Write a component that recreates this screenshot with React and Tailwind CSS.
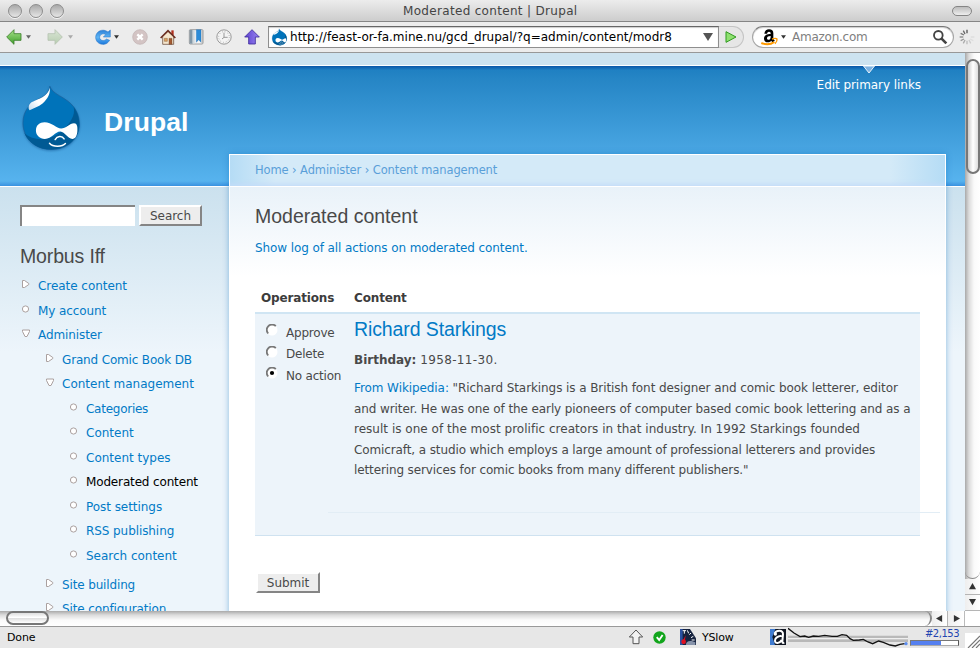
import React from "react";

const SANS = "font-['DejaVu_Sans',sans-serif]";
const HELV = "font-['Liberation_Sans',sans-serif]";
const UI = "font-['Noto_Sans',sans-serif]";

function TitleBar() {
  return (
    <div className="relative flex h-[22px] shrink-0 items-center border-b border-[#858585] bg-gradient-to-b from-[#ececec] to-[#cdcdcd] px-2">
      <div className="flex gap-[7px]">
        {[0, 1, 2].map((i) => (
          <span key={i} className="size-[14px] rounded-full border border-[#8d8d8d] bg-gradient-to-b from-[#a9a9a9] to-[#e6e6e6] shadow-[0_1px_0_#f4f4f4]" />
        ))}
      </div>
      <span className={`${SANS} ml-[339px] text-[12px] tracking-[0.32px] whitespace-nowrap text-[#444]`}>Moderated content | Drupal</span>
      <span className="mr-0 ml-auto h-[10px] w-[20px] rounded-full border border-[#858585] bg-gradient-to-b from-[#bdbdbd] to-[#eee]" />
    </div>
  );
}

function Caret({ className }) {
  return (
    <svg viewBox="0 0 6 4" className={`h-[4px] w-[5px] shrink-0 ${className}`}>
      <path d="M0 0h6L3 4z" fill="currentColor" />
    </svg>
  );
}

function DropletIcon({ className }) {
  return (
    <svg viewBox="60 70 190 210" className={className}>
      <defs>
        <linearGradient id="dropHi" x1="0" y1="1" x2="1" y2="0">
          <stop offset="0" stopColor="#c3dcef" />
          <stop offset="0.4" stopColor="#fff" />
        </linearGradient>
      </defs>
      <path d="M150 79c6 18 24 25 44 38 30 19 45 43 45 77 0 44-37 76-84 76-49 0-86-34-86-80 0-36 20-58 46-71 20-10 33-20 35-40z" fill="#0073ba" stroke="#1a5f9a" strokeWidth="2" />
      <path d="M222 142c10 14 17 31 17 52 0 44-37 76-84 76-40 0-70-20-82-50 30 28 84 24 116-8 24-24 38-44 33-70z" fill="#005a94" />
      <path d="M150 84c2 16-6 34-22 47-13 10-26 14-39 21-5-6-4-15 3-22 14-11 50-14 58-46z" fill="url(#dropHi)" />
      <path d="M134 188c22 0 36 18 50 19 14 0 26-16 39-16 9 0 11 10 10 23-1 14-6 24-15 24-14 0-23-21-36-22-15-1-26 22-47 22-15 0-27-10-27-25 0-16 11-25 26-25z" fill="#fff" />
      <path d="M166 240c6-11 21-12 27-2M149 251c10 12 38 12 48 1" fill="none" stroke="#fff" strokeWidth="4.500" strokeLinecap="round" />
    </svg>
  );
}

function ArrowIcon({ className, from, to, stroke }) {
  return (
    <svg viewBox="0 0 48 48" className={`size-[16px] shrink-0 ${className}`}>
      <defs>
        <linearGradient id={"arr" + from.slice(1)} x1="0" y1="0" x2="0" y2="1">
          <stop offset="0" stopColor={from} />
          <stop offset="1" stopColor={to} />
        </linearGradient>
      </defs>
      <path d="M2 24 24 2v12h21v20H24v12z" fill={`url(#arr${from.slice(1)})`} stroke={stroke} strokeWidth="2.5" strokeLinejoin="round" />
    </svg>
  );
}

function Toolbar() {
  return (
    <div className="flex h-[31px] shrink-0 items-center border-b border-[#989898] bg-[#ececec] pl-[6px]">
      <ArrowIcon from="#a7e38a" to="#3f9f2b" stroke="#3c7f2c" />
      <Caret className="ml-[4px] text-[#666]" />
      <ArrowIcon className="ml-[16px] rotate-180" from="#b7cdb0" to="#d9e5d4" stroke="#b6c3b1" />
      <Caret className="ml-[5px] text-[#aaa]" />
      <svg viewBox="0 0 48 48" className="ml-[22px] size-[16px] shrink-0">
        <defs>
          <linearGradient id="reload" x1="0" y1="0" x2="0" y2="1">
            <stop offset="0" stopColor="#2c7fd6" />
            <stop offset="0.5" stopColor="#5db4f4" />
            <stop offset="1" stopColor="#1c78dc" />
          </linearGradient>
        </defs>
        <path d="M46 3v21H25l7-7c-8-6-18 0-18 8 0 10 13 13 20 5l10 4C38 44 30 47 22 46 10 45 2 36 2 25 2 6 24-3 39 9z" fill="url(#reload)" stroke="#1f6fc4" strokeWidth="1.5" />
      </svg>
      <Caret className="ml-[3px] text-[#333]" />
      <svg viewBox="0 0 48 48" className="ml-[13px] size-[16px] shrink-0">
        <circle cx="24" cy="24" r="22" fill="#d3c4c4" stroke="#c0b0b0" strokeWidth="2" />
        <path d="m16 16 16 16M32 16 16 32" stroke="#fff" strokeWidth="7" />
      </svg>
      <svg viewBox="0 0 48 48" className="ml-[12px] size-[16px] shrink-0">
        <path d="M34 4h7v14h-7z" fill="#b3301e" />
        <path d="M8 22 24 7l17 15v24H8z" fill="#f5e6cd" stroke="#5b3a28" strokeWidth="2" />
        <path d="M2 27 24 5l22 22" fill="none" stroke="#6b2d20" strokeWidth="5" />
        <path d="M27 28h9v18h-9z" fill="#a45b32" stroke="#5b3a28" />
        <path d="M13 28h9v9h-9z" fill="#e0a15e" stroke="#5b3a28" />
      </svg>
      <svg viewBox="0 0 48 48" className="ml-[12px] size-[16px] shrink-0">
        <rect x="4" y="2" width="41" height="43" rx="3" fill="#f4f4f4" stroke="#777" strokeWidth="2" />
        <path d="M5 3h9v41H5z" fill="#8298a8" />
        <path d="M14 3h6v41h-6z" fill="#cfd8de" />
        <path d="M25 2h14v38l-7-8-7 8z" fill="#2b8bd8" stroke="#1767ad" />
        <path d="M41 4h3v40h-3z" fill="#aaa" />
      </svg>
      <svg viewBox="0 0 48 48" className="ml-[12px] size-[16px] shrink-0">
        <circle cx="24" cy="24" r="21.5" fill="#f4f4f4" stroke="#999" strokeWidth="3" />
        <circle cx="24" cy="24" r="16" fill="none" stroke="#999" strokeWidth="3" strokeDasharray="2 6.4" />
        <path d="M24 11v14h11M24 25l-6 5" fill="none" stroke="#888" strokeWidth="2.5" />
      </svg>
      <ArrowIcon className="ml-[12px] rotate-90" from="#9a86f0" to="#5b3fd0" stroke="#3d2a9c" />
      <div className="ml-[8px] flex h-[22px] w-[451px] shrink-0 items-center border border-[#8e8e8e] border-t-[#666] bg-white pl-[2px] shadow-[inset_0_1px_1px_#ccc]">
        <DropletIcon className="h-[18px] w-[17px] shrink-0" />
        <span className={`${SANS} ml-[2px] text-[12px] tracking-[0.02px] whitespace-nowrap text-black`}>http://feast-or-fa.mine.nu/gcd_drupal/?q=admin/content/modr8</span>
        <svg viewBox="0 0 10 8" className="mr-[5px] ml-auto h-[8px] w-[10px]">
          <path d="M0 0h10L5 8z" fill="#555" />
        </svg>
      </div>
      <div className="flex h-[22px] w-[25px] shrink-0 items-center rounded-r-full border border-l-0 border-[#c4c4c4] bg-[#e6e6e6] pl-[6px]">
        <svg viewBox="0 0 36 36" className="size-[12px]">
          <path d="M3 2 33 18 3 34z" fill="#8fe070" stroke="#2f9a1e" strokeWidth="3" strokeLinejoin="round" />
        </svg>
      </div>
      <div className="ml-[8px] flex h-[22px] w-[202px] shrink-0 items-center rounded-full border border-[#a5a5a5] border-t-[#777] bg-white pl-[8px] shadow-[inset_0_1px_1px_#ccc]">
        <svg viewBox="0 0 48 48" className="size-[16px] shrink-0 overflow-visible">
          <path d="M10 14C11 5 17 1 24 1c9 0 13 4 13 12v14c0 4 2 6 5 8l-7 5c-2-1-3-3-4-5-8 9-22 5-22-6 0-10 9-14 20-14 0-5-1-7-5-7-3 0-5 2-6 6zM29 21c-7 0-11 2-11 7 0 7 11 6 11-4z" fill="#000" fillRule="evenodd" />
          <path d="M1 42c14 6 28 5 39-3" fill="none" stroke="#ff9a00" strokeWidth="6" />
          <path d="M33 30c7-2 13-2 15 0 1 4-1 9-6 14" fill="none" stroke="#ff9a00" strokeWidth="4" />
        </svg>
        <Caret className="ml-[4px] text-[#333]" />
        <span className={`${SANS} ml-[6px] text-[12px] tracking-[-0.25px] text-[#808080]`}>Amazon.com</span>
        <svg viewBox="0 0 48 48" className="mr-[5px] ml-auto size-[16px]">
          <circle cx="19" cy="19" r="13" fill="none" stroke="#444" strokeWidth="5.5" />
          <path d="m28 28 15 15" stroke="#444" strokeWidth="8" />
        </svg>
      </div>
      <svg viewBox="0 0 48 48" className="ml-[5px] size-[16px] shrink-0" strokeWidth="4">
        <path d="M24 2v11" stroke="#555" />
        <path d="m13 5 5 10" stroke="#666" />
        <path d="m5 13 10 5" stroke="#777" />
        <path d="M2 24h11" stroke="#888" />
        <path d="m5 35 10-5" stroke="#999" />
        <path d="m13 43 5-10" stroke="#aaa" />
        <path d="M24 46V35" stroke="#bbb" />
        <path d="m35 43-5-10" stroke="#ccc" />
        <path d="m43 35-10-5M46 24H35" stroke="#ddd" />
      </svg>
    </div>
  );
}

function Bullet({ kind }) {
  return (
    <svg viewBox="0 0 10 10" className="-mt-[4px] size-[10px] shrink-0" fill="#fff" stroke="#aaa09f" strokeWidth="1">
      {kind === "leaf" && <circle cx="5.500" cy="5" r="3.100" />}
      {kind === "closed" && <path d="M2.500 1.500v7h2l4.300-3V4.500l-4.300-3z" strokeLinejoin="round" />}
      {kind === "open" && <path d="M2.500 2h7v1.500L7 8.500H5l-2.500-5z" strokeLinejoin="round" />}
    </svg>
  );
}

const MENU = [
  [0, "closed", "Create content", "tracking-[-0.05px]"],
  [0, "leaf", "My account", "tracking-[-0.1px]"],
  [0, "open", "Administer", "tracking-[-0.1px]"],
  [1, "closed", "Grand Comic Book DB", "tracking-[-0.16px]"],
  [1, "open", "Content management", "tracking-normal"],
  [2, "leaf", "Categories", "tracking-[-0.26px]"],
  [2, "leaf", "Content", "tracking-normal"],
  [2, "leaf", "Content types", "tracking-normal"],
  [2, "leaf", "Moderated content", "tracking-[-0.15px]"],
  [2, "leaf", "Post settings", "tracking-[-0.05px]"],
  [2, "leaf", "RSS publishing", "tracking-[-0.08px]"],
  [2, "leaf", "Search content", "tracking-[-0.02px]"],
  [1, "closed", "Site building", "tracking-[-0.14px]"],
  [1, "closed", "Site configuration", "tracking-[-0.12px]"],
];
const INDENT = ["pl-[20px]", "pl-[44px]", "pl-[68px]"];

function Button({ children, className }) {
  return (
    <button className={`flex items-center justify-center border-t-2 border-r-2 border-b-2 border-l-2 border-t-white border-r-[#858585] border-b-[#858585] border-l-white bg-[#ededed] text-[12px] tracking-[-0.05px] text-[#494949] ${className}`}>
      {children}
    </button>
  );
}

function Sidebar() {
  return (
    <div className="w-[229px] shrink-0 pt-[18px] whitespace-nowrap">
      <div className="flex gap-[4px] pl-[20px]">
        <div className="h-[21px] w-[115px] border-t-2 border-l-2 border-[#858585] bg-white" />
        <Button className="h-[21px] w-[63px]">Search</Button>
      </div>
      <h2 className={`${HELV} mt-[19px] h-[28.800px] pl-[20px] text-[19.500px] leading-[22px] tracking-[-0.15px] text-[#494949]`}>Morbus Iff</h2>
      {MENU.map(([level, kind, label, tracking]) => (
        <div key={label} className={`flex h-[24.500px] items-center gap-[8px] ${INDENT[level]} ${label === "Site building" ? "mt-[4.500px]" : ""}`}>
          <Bullet kind={kind} />
          <a className={`text-[12px] ${tracking} ${label === "Moderated content" ? "text-black" : "text-[#027ac6]"}`}>{label}</a>
        </div>
      ))}
    </div>
  );
}

function Radio({ checked }) {
  return (
    <svg viewBox="0 0 12 12" className="-mt-[5px] size-[12px] shrink-0">
      <circle cx="6" cy="6" r="5.500" fill="#fff" />
      <path d="M2.200 9.500A5 5 0 0 1 9.800 2.200" fill="none" stroke="#777" strokeWidth="1.800" />
      {checked && <circle cx="6" cy="6" r="2.100" fill="#000" />}
    </svg>
  );
}

function Panel() {
  return (
    <div className="-mt-[33px] flex w-[717px] shrink-0 flex-col border-x border-t border-white bg-[#ffffff] shadow-[0_0_6px_rgba(20,110,190,0.45)]">
      <div className="flex h-[32px] shrink-0 items-center border-b border-white bg-[linear-gradient(90deg,#b5dcf5_0,#d4eaf8_45px,#d4eaf8_660px,#b5dcf5_100%)] pl-[25px] text-[11.500px] tracking-[-0.11px] text-[#5a9fd8] shadow-[inset_0_-5px_5px_-3px_#c4dcf8]">
        Home › Administer › Content management
      </div>
      <div className="flex grow flex-col bg-[linear-gradient(#e9f2f9_0,#fff_90px)] pl-[25px]">
        <h2 className={`${HELV} mt-[18px] text-[19.500px] leading-[22px] text-[#494949]`}>Moderated content</h2>
        <p className="mt-[10px] text-[12px] leading-[22px] tracking-[-0.095px] text-[#027ac6]">Show log of all actions on moderated content.</p>
        <div className="mt-[29px] flex h-[24px] pl-[6px] text-[12px] leading-[21px] font-bold tracking-[-0.15px] text-[#3c3c3c]">
          <span className="w-[93px]">Operations</span>
          <span>Content</span>
        </div>
        <div className="flex h-[224px] w-[665px] shrink-0 border-t-2 border-b border-t-[#d0e5f3] border-b-[#cfe2f0] bg-[#edf4fa]">
          <div className="w-[99px] shrink-0 pt-[8px] pl-[11px] text-[12px] tracking-[-0.2px] text-[#494949]">
            {["Approve", "Delete", "No action"].map((t) => (
              <div key={t} className="flex h-[21.500px] items-center gap-[8px] whitespace-nowrap">
                <Radio checked={t === "No action"} />
                {t}
              </div>
            ))}
          </div>
          <div className="w-[566px] shrink-0 text-[12px] text-[#494949]">
            <h2 className={`${HELV} mt-[4px] text-[19.500px] leading-[22px] tracking-[-0.1px] text-[#027ac6]`}>Richard Starkings</h2>
            <p className="mt-[10px] leading-[20px]"><b>Birthday:</b> <span className="tracking-[0.35px]">1958-11-30.</span></p>
            <div className="mt-[8px] leading-[20.500px] whitespace-nowrap">
              <p className="tracking-[-0.085px]"><span className="text-[#027ac6]">From Wikipedia:</span> "Richard Starkings is a British font designer and comic book letterer, editor</p>
              <p className="tracking-[-0.1px]">and writer. He was one of the early pioneers of computer based comic book lettering and as a</p>
              <p className="tracking-[0.02px]">result is one of the most prolific creators in that industry. In 1992 Starkings founded</p>
              <p className="tracking-[-0.11px]">Comicraft, a studio which employs a large amount of professional letterers and provides</p>
              <p className="tracking-[-0.12px]">lettering services for comic books from many different publishers."</p>
            </div>
            <div className="mt-[31px] -ml-[26px] h-px w-[612px] bg-[#e2edf5]" />
          </div>
        </div>
        <Button className="mt-[36px] ml-px h-[21px] w-[64px]">Submit</Button>
      </div>
    </div>
  );
}

function Page() {
  return (
    <div className={`${SANS} flex h-[558px] w-[965px] flex-col overflow-hidden bg-[#edf5fb]`}>
      <div className="h-[13px] shrink-0 border-b border-white bg-[#cde3f0]" />
      <div className="flex h-[121px] shrink-0 justify-between border-b border-white bg-[linear-gradient(#0a57a8_0,#1f80c2_4px,#2585c5_12px,#57b3ee_115px,#3a92e0_100%)]">
        <div className="flex pt-[17px] pl-[20px]">
          <DropletIcon className="h-[70px] w-[63px] drop-shadow-[0_1px_1px_rgba(0,60,120,0.4)]" />
          <h1 className={`${HELV} mt-[24px] ml-[21px] text-[26.500px] leading-[30px] font-bold tracking-[0.1px] text-white`}>Drupal</h1>
        </div>
        <div className="flex flex-col items-center pr-[44px] text-[12px] text-white">
          <svg viewBox="0 0 12 8" className="h-[8px] w-[12px]">
            <path d="M0.500 0h11L6 7z" fill="#7fb2e0" stroke="#e8f3fb" />
          </svg>
          <span className="mt-[2px] tracking-[-0.05px]">Edit primary links</span>
        </div>
      </div>
      <div className="flex grow bg-[linear-gradient(#cbe1ee_0,#edf5fb_165px)]">
        <Sidebar />
        <Panel />
      </div>
    </div>
  );
}

const ARROWS = {
  up: "M4 0 8 7H0z",
  down: "M0 0h8L4 7z",
  left: "M7 0v8L0 4z",
  right: "M1 0v8l7-4z",
};
function ScrollArrow({ dir, className }) {
  return (
    <div className={`flex shrink-0 items-center justify-center border-[#b5b5b5] bg-gradient-to-r from-[#eee] to-white ${className}`}>
      <svg viewBox="0 0 8 8" className="size-[7px]"><path d={ARROWS[dir]} fill="#333" /></svg>
    </div>
  );
}

function VerticalScrollbar() {
  return (
    <div className="flex w-[15px] flex-col bg-[linear-gradient(90deg,#a9a9a9_0,#dcdcdc_4px,#fafafa_9px,#fff_100%)]">
      <div className="mt-[6px] ml-px h-[115px] w-[14px] rounded-full border-2 border-[#777] bg-gradient-to-r from-[#ccc] via-white to-[#ddd]" />
      <div className="mt-auto h-[10px] shrink-0 rounded-b-full border-b border-[#888]" />
      <ScrollArrow dir="up" className="h-[16px] border-b" />
      <ScrollArrow dir="down" className="h-[16px] border-b" />
    </div>
  );
}

function HorizontalScrollbar() {
  return (
    <div className="flex h-[16px] shrink-0 border-b border-[#999]">
      <div className="flex w-[965px] border-r border-[#bbb] bg-[linear-gradient(#a9a9a9_0,#dcdcdc_4px,#fafafa_9px,#fff_100%)]">
        <div className="ml-[6px] h-[14px] w-[43px] rounded-full border-2 border-[#777] bg-[linear-gradient(#ddd,#fff_45%,#ddd_50%,#fff)]" />
        <div className="ml-auto w-[10px] rounded-r-full border-r-2 border-[#888]" />
        <ScrollArrow dir="left" className="w-[16px] border-r" />
        <ScrollArrow dir="right" className="w-[16px]" />
      </div>
      <div className="grow bg-white" />
    </div>
  );
}

function StatusBar() {
  return (
    <div className={`${SANS} flex h-[21px] shrink-0 items-start bg-[#e7e7e7] pl-[7px] text-[11px] text-black`}>
      <span className="w-[621px] leading-[21px] tracking-[-0.15px]">Done</span>
      <svg viewBox="0 0 48 48" className="mt-[2px] size-[16px] shrink-0">
        <path d="M24 3 44 24H33v20H15V24H4z" fill="#f2f2f2" stroke="#555" strokeWidth="3" />
      </svg>
      <svg viewBox="0 0 42 42" className="mt-[4px] ml-[9px] size-[13px] shrink-0">
        <circle cx="21" cy="21" r="20" fill="#12a51c" />
        <path d="m12 20 8 9 11-16" fill="none" stroke="#fff" strokeWidth="6" />
      </svg>
      <svg viewBox="0 0 48 48" className="mt-[2px] ml-[14px] size-[16px] shrink-0">
        <path d="M0 0h30l18 28v20H0z" fill="#16233f" />
        <path d="M0 0h8v48H0z" fill="#2a50a0" />
        <path d="M8 5h10M13 5v9M22 4l4 9M33 12l-5 5M40 22l-7 4M44 33h-9" stroke="#fff" strokeWidth="3" />
        <path d="M17 19 13 45l-8-3z" fill="#e01020" />
        <circle cx="11" cy="38" r="7" fill="#e01020" />
        <path d="M18 46c0-10 12-14 28-6v8H18z" fill="#8793aa" />
      </svg>
      <span className="ml-[6px] w-[68px] leading-[21px] tracking-[-0.2px]">YSlow</span>
      <svg viewBox="0 0 48 48" className="mt-[2px] size-[16px] shrink-0">
        <path d="M0 0h48v48H0z" fill="#101622" />
        <path d="M0 0h16L7 24l8 24H0z" fill="#3f7bd0" />
        <path d="M14 13c5-10 26-11 25 3L37 38c0 4 2 5 6 3M35 20c-13 2-20 8-20 15 0 10 14 9 20-2" fill="none" stroke="#fff" strokeWidth="6" />
        <circle cx="16" cy="15" r="5" fill="#fff" />
      </svg>
      <svg viewBox="0 0 363 60" className="ml-[2px] h-[20px] w-[121px] shrink-0">
        <path d="M0 30h360M0 41h360" stroke="#b9b9b9" strokeWidth="8" />
        <path d="M0 35h360" stroke="#fff" strokeWidth="2" />
        <path d="M0 4 18 18 36 29l14-2 12 4 14-4 16 1 18-3 22 3 16 0 14-5 14 2 10 10 10 5 18-1 12-2 14 8 14 5 18-8 14 4 20 8 16 3 14-5 14-2" fill="none" stroke="#111" strokeWidth="4" />
        <circle cx="354" cy="50" r="5" fill="#5b8df0" />
      </svg>
      <div className="flex w-[52px] flex-col items-end pr-[2px]">
        <span className="mt-px h-[12px] text-[10px] leading-[12px] tracking-[-0.5px] text-[#2244b0]">#2,153</span>
        <div className="h-[6px] w-[49px] border border-t-[#777] border-r-[#555] border-b-[#aaa] border-l-[#777] bg-white">
          <div className="h-full w-[30px] bg-[#5580f0]" />
        </div>
      </div>
      <div className="mt-[6px] ml-auto h-[15px] w-[15px] bg-white">
        <svg viewBox="0 0 15 15" className="size-[15px]">
          <path d="m3 15 12-12M7 15l8-8M11 15l4-4" stroke="#777" strokeWidth="1.200" />
        </svg>
      </div>
    </div>
  );
}

export default function App() {
  return (
    <div className={`${UI} flex h-[648px] w-[980px] flex-col overflow-hidden bg-white`}>
      <TitleBar />
      <Toolbar />
      <div className="flex h-[558px] shrink-0">
        <Page />
        <VerticalScrollbar />
      </div>
      <HorizontalScrollbar />
      <StatusBar />
    </div>
  );
}
